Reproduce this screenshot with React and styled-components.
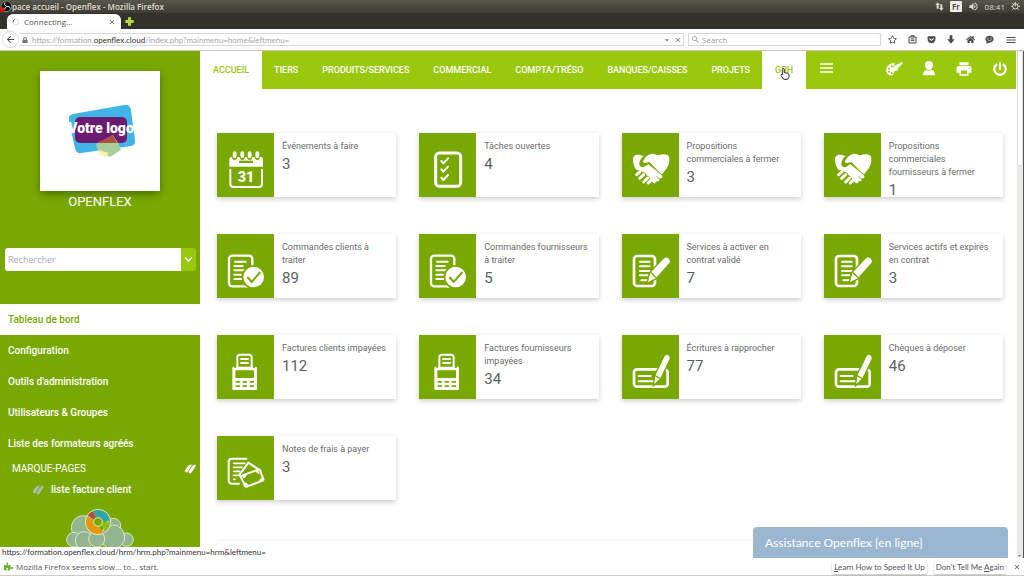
import React from "react";
import styled, { createGlobalStyle } from "styled-components";
import {
  FaCaretDown,
  FaChevronDown,
  FaGetPocket,
  FaHome,
  FaLock,
  FaPowerOff,
  FaPuzzlePiece,
  FaRegStar,
} from "react-icons/fa";
import {
  MdArrowBack,
  MdClose,
  MdMenu,
  MdPrint,
  MdSearch,
  MdVolumeUp,
} from "react-icons/md";

const GREEN = "#7aa802";
const LIME = "#99c80d";

const GlobalStyle = createGlobalStyle`
  * {
    box-sizing: border-box;
  }

  body {
    margin: 0;
    background-color: white;
    font-family: Roboto, sans-serif;
  }

  a {
    color: inherit;
    text-decoration: none;
  }

  button {
    margin: 0;
    padding: 0;
    border: none;
    background: none;
    color: inherit;
    font: inherit;
    cursor: pointer;
  }

  svg {
    display: block;
    flex-shrink: 0;
  }
`;

/* browser window */

const Window = styled.div`
  display: flex;
  flex-direction: column;
  height: 100vh;
  overflow: hidden;
`;

const TitleBar = styled.div`
  display: flex;
  align-items: center;
  justify-content: space-between;
  height: 13px;
  flex-shrink: 0;
  padding-right: 4px;
  background: linear-gradient(#57564a, #3d3c36);
  color: #dfdbd2;
  font: 8px "Open Sans", sans-serif;
`;

const TitleText = styled.div`
  display: flex;
  align-items: center;
  font-weight: 600;
`;

const Tray = styled.div`
  display: flex;
  align-items: center;
  gap: 6px;
`;

const Keyboard = styled.span`
  padding: 0 2px;
  border-radius: 1px;
  background-color: #eeece6;
  color: #3c3b36;
  font-weight: 600;
  line-height: 11px;
`;

const TabStrip = styled.div`
  display: flex;
  align-items: flex-end;
  height: 16px;
  flex-shrink: 0;
  padding-left: 7px;
  gap: 4px;
  background-color: #33322d;
`;

const BrowserTab = styled.div`
  display: flex;
  align-items: center;
  gap: 4px;
  width: 114px;
  height: 15px;
  padding: 0 5px;
  border-radius: 6px 6px 0 0;
  background-color: white;
  color: #55544f;
  font: 8px "Open Sans", sans-serif;

  span {
    flex: 1;
  }
`;

const NewTabButton = styled.button`
  align-self: center;
`;

const NavigationBar = styled.div`
  display: flex;
  align-items: center;
  height: 22px;
  flex-shrink: 0;
  padding: 0 7px 0 2px;
  border-bottom: 1px solid #c9c9c9;
  background-color: #fdfdfd;
  color: #4a4a46;
`;

const BackButton = styled.button`
  display: flex;
  align-items: center;
  justify-content: center;
  width: 17px;
  height: 17px;
  border: 1px solid #ddd;
  border-radius: 50%;
  background-color: white;
`;

const AddressBar = styled.div`
  display: flex;
  align-items: center;
  flex: 1;
  gap: 4px;
  height: 13px;
  padding: 0 1px 0 3px;
  border: 1px solid #d8d8d8;
  border-left: none;
  color: #777;
`;

const AddressText = styled.div`
  flex: 1;
  color: #aaa;
  font: 8px Lato, sans-serif;

  b {
    color: #333;
    font-weight: normal;
  }
`;

const SearchBar = styled.label`
  display: flex;
  align-items: center;
  gap: 2px;
  width: 193px;
  height: 13px;
  margin-left: 4px;
  padding: 0 2px;
  border: 1px solid #d8d8d8;
  color: #999;

  input {
    min-width: 0;
    flex: 1;
    padding: 0;
    border: none;
    outline: none;
    font: 8px "Open Sans", sans-serif;
  }

  input::placeholder {
    color: #999;
    opacity: 1;
  }
`;

const BrowserButtons = styled.div`
  display: flex;
  align-items: center;
  justify-content: space-between;
  width: 129px;
  margin-left: 7px;
`;

const Notice = styled.div`
  display: flex;
  align-items: center;
  height: 18px;
  flex-shrink: 0;
  padding: 0 3px 0 4px;
  gap: 3px;
  border-bottom: 1px solid #ccc;
  background-color: white;
  color: #555;
  font: 8px "Open Sans", sans-serif;

  p {
    flex: 1;
    margin: 0;
  }
`;

const NoticeButton = styled.button`
  height: 14px;
  padding: 0 2px;
  margin-right: 4px;
  border-radius: 2px;
  box-shadow: 0 1px 2px rgba(0, 0, 0, 0.25);
  font: 8px Lato, sans-serif;
`;

/* page */

const Page = styled.div`
  position: relative;
  display: flex;
  flex: 1;
  min-height: 0;
`;

const Sidebar = styled.aside`
  width: 200px;
  flex-shrink: 0;
  overflow: hidden;
  background-color: ${GREEN};
  color: white;
`;

const LogoCard = styled.div`
  width: 120px;
  margin: 20px auto 0;
  background-color: white;
  box-shadow: 0 3px 8px rgba(0, 0, 0, 0.35);
`;

const CompanyName = styled.h1`
  margin: 3px 0 38px;
  text-align: center;
  font-size: 13px;
  font-weight: normal;
  line-height: 16px;
`;

const SearchForm = styled.form`
  display: flex;
  height: 23px;
  margin: 0 4px 33px 5px;
  border-radius: 3px;
  overflow: hidden;

  input {
    min-width: 0;
    flex: 1;
    padding: 0 3px;
    border: none;
    outline: none;
    font: 9px "Open Sans", sans-serif;
  }

  input::placeholder {
    color: #aaa;
    opacity: 1;
  }

  button {
    display: flex;
    align-items: center;
    justify-content: center;
    width: 15px;
    background-color: ${LIME};
  }
`;

const MenuLink = styled.a`
  display: block;
  padding: 0 8px;
  background-color: ${(props) => (props.$active ? "white" : "transparent")};
  color: ${(props) => (props.$active ? GREEN : "white")};
  font-size: 10px;
  font-weight: 500;
  line-height: 31px;
`;

const BookmarkTitle = styled.div`
  display: flex;
  align-items: center;
  justify-content: space-between;
  padding: 0 4px 0 12px;
  font-size: 10px;
  line-height: 20px;
`;

const BookmarkLink = styled.a`
  display: flex;
  align-items: center;
  gap: 7px;
  padding-left: 32px;
  font-size: 10px;
  font-weight: 500;
  line-height: 21px;
`;

const CloudLogo = styled.svg`
  margin: 9px auto 0;
`;

const Main = styled.main`
  flex: 1;
  min-width: 0;
  overflow: hidden;
`;

const TopBar = styled.header`
  display: flex;
  height: 38px;
  margin-right: 1px;
  background-color: ${LIME};
  color: white;
`;

const TopNav = styled.nav`
  display: flex;
  flex: 1;
`;

const TopLink = styled.a`
  padding: 0 ${(props) => (props.$active ? "13px" : "12px")};
  background-color: ${(props) => (props.$active ? "white" : "transparent")};
  color: ${(props) => (props.$active ? LIME : "white")};
  font-size: 9px;
  font-weight: 500;
  line-height: 38px;
`;

const TopButtons = styled.div`
  display: flex;
  align-items: center;
  gap: 20px;
  padding: 0 9px 3px 0;
`;

const MenuButton = styled.button`
  padding: 0 14px 4px;
`;

const CardGrid = styled.div`
  display: grid;
  grid-template-columns: repeat(4, 1fr);
  gap: 37px 23px;
  padding: 44px 14px 41px 17px;
`;

const CardLink = styled.a`
  display: flex;
  height: 64px;
  background-color: white;
  box-shadow: 0 2px 5px rgba(0, 0, 0, 0.2);
`;

const CardIcon = styled.svg`
  width: 57px;
  height: 64px;
  background-color: ${GREEN};
`;

const CardBody = styled.div`
  padding: 7px 8px 0;
`;

const CardLabel = styled.div`
  color: #6b6b6b;
  font-size: 9px;
  line-height: 13px;
`;

const CardValue = styled.div`
  color: #5c5f63;
  font-size: 15px;
  line-height: 22px;
`;

const NextPanel = styled.section`
  height: 60px;
  margin: 0 14px 0 17px;
  box-shadow: 0 0 3px rgba(0, 0, 0, 0.1);
`;

const ScrollTrack = styled.div`
  display: flex;
  flex-direction: column;
  justify-content: space-between;
  width: 7px;
  border-right: 1px solid #555;
  background-color: #e9e9e6;
  color: #777;
`;

const ScrollThumb = styled.div`
  height: 115px;
  border: 1px solid #ddd;
  border-radius: 2px;
  background-color: white;
`;

const StatusText = styled.div`
  position: absolute;
  left: 0;
  bottom: 0;
  padding: 0 2px;
  background-color: white;
  color: #333;
  font: 8px Lato, sans-serif;
  line-height: 11px;
`;

const ChatButton = styled.button`
  position: absolute;
  right: 16px;
  bottom: 0;
  width: 255px;
  padding: 0 12px;
  border-radius: 4px 4px 0 0;
  background-color: #9bb6d0;
  color: white;
  font: 12px Lato, sans-serif;
  line-height: 31px;
  text-align: left;
`;

const Cursor = styled.svg`
  position: absolute;
  left: 780px;
  top: 17px;
`;

/* card drawings, all on a 171 x 192 canvas */

const CalendarIcon = () => (
  <>
    <path
      fill="white"
      d="M37 78q0-6 6-6h89q6 0 6 6v23H37z"
    />
    {[53, 76, 98, 121].map((x) => (
      <g key={x}>
        <ellipse cx={x} cy="67" rx="9" ry="14" fill={GREEN} />
        <ellipse cx={x} cy="65" rx="6" ry="10" fill="white" />
      </g>
    ))}
    <rect x="66" y="83" width="42" height="7" fill={GREEN} />
    <path
      d="M40 108v44q0 10 10 10h75q10 0 10-10v-44"
      fill="none"
      stroke="white"
      strokeWidth="6"
    />
    <text
      x="87"
      y="147"
      textAnchor="middle"
      fill="white"
      fontFamily="Roboto, sans-serif"
      fontWeight="900"
      fontSize="43"
    >
      31
    </text>
  </>
);

const TasksIcon = () => (
  <g
    fill="none"
    stroke="white"
    strokeWidth="6"
    strokeLinecap="round"
    strokeLinejoin="round"
  >
    <rect x="50" y="60" width="75" height="100" rx="11" strokeWidth="9" />
    <path d="M67 84l6 7 14-15M67 109l6 7 14-15M67 134l6 7 14-15" />
  </g>
);

const HandshakeIcon = () => (
  <>
    <g fill="white">
      <path d="M33 80c-1-10 7-16 17-15 7 1 12 5 20 3-8 5-14 13-16 21-2 11 6 14 14 9l9-6 42 34c5 5 1 12-5 10 1 6-4 11-10 8 0 5-5 8-9 6-5-2-5-8-10-12-3-6-7-9-11-11-2-7-8-11-14-11-4-6-10-6-15-4-9-8-11-20-12-32z" />
      <path d="M62 88c5-13 15-25 29-26 9 0 13 5 20 4 9-3 20-3 26 0 7 5 6 21 2 31-5 12-13 19-20 28L83 88c-8 0-12 5-21 0z" />
    </g>
    <g stroke="white" strokeWidth="9" strokeLinecap="round">
      <path d="M44 125l10-9M53 136l12-11M65 147l12-12M79 150l7-7" />
    </g>
    <path
      d="M70 68c-8 5-14 13-16 21-2 11 6 14 14 9l13-8"
      fill="none"
      stroke={GREEN}
      strokeWidth="4"
    />
    <path
      d="M104 130l12 12M113 120l13 11"
      stroke={GREEN}
      strokeWidth="3"
    />
  </>
);

const OrderIcon = () => (
  <>
    <g fill="none" stroke="white" strokeWidth="7" strokeLinecap="round">
      <rect x="36" y="65" width="70" height="92" rx="10" />
      <path
        d="M54 83h32M52 96h25M52 109h32M52 122h20M52 135h25"
        strokeWidth="6"
      />
    </g>
    <circle cx="110" cy="129" r="36" fill={GREEN} />
    <circle cx="110" cy="129" r="31" fill="white" />
    <path
      d="M91 129l13 15 26-30"
      fill="none"
      stroke={GREEN}
      strokeWidth="6"
    />
  </>
);

const ContractIcon = () => (
  <>
    <g fill="none" stroke="white" strokeWidth="8" strokeLinecap="round">
      <rect x="36" y="66" width="63" height="90" rx="10" />
      <path d="M54 83h29M54 97h29M54 111h29M54 124h22M58 139h18" strokeWidth="6" />
    </g>
    <path
      d="M78 144l7-27 40-43q8-7 15 0t1 14l-40 45z"
      fill="white"
      stroke={GREEN}
      strokeWidth="8"
      paintOrder="stroke"
    />
    <path d="M86 115l17 16" stroke={GREEN} strokeWidth="4" />
  </>
);

const InvoiceIcon = () => (
  <>
    <path
      d="M61 98V67q0-8 8-8h27q8 0 8 8v31M70 72h25M70 84h25"
      fill="none"
      stroke="white"
      strokeWidth="6"
    />
    <rect x="46" y="95" width="74" height="70" rx="4" fill="white" />
    <path
      fill={GREEN}
      d="M55 106h56v23H55zM56 138h13v5H56zM77 138h13v5H77zM98 138h13v5H98zM56 151h13v5H56zM77 151h13v5H77zM98 151h13v5H98zM52 91h5v8h-5zM108 91h5v8h-5z"
    />
  </>
);

const ChequeIcon = () => (
  <>
    <g fill="none" stroke="white" strokeWidth="8" strokeLinecap="round">
      <rect x="36" y="103" width="101" height="52" rx="9" />
      <path d="M50 123h36M50 139h43" strokeWidth="6" />
    </g>
    <path
      d="M97 147l3-25 27-57q6-9 12-4t3 12l-27 57z"
      fill="white"
      stroke={GREEN}
      strokeWidth="8"
      paintOrder="stroke"
    />
    <path d="M98 121l19 11" stroke={GREEN} strokeWidth="4" />
  </>
);

const ExpenseIcon = () => (
  <>
    <g fill="none" stroke="white" strokeWidth="6" strokeLinecap="round">
      <path d="M88 68H45q-10 0-10 10v54q0 11 10 11h21" />
      <path d="M50 82h33M50 94h25M50 106h18M50 118h10M50 130h4" strokeWidth="5" />
    </g>
    <g fill={GREEN} stroke="white" strokeWidth="6" strokeLinejoin="round">
      <path d="M66 118l28-38 36 24-26 38z" />
      <path d="M74 119l50-18q4-1 5 2l10 26q1 4-2 5l-48 18q-4 1-5-2l-12-27q-1-3 2-4z" />
    </g>
    <path
      d="M76 119l14-5q-2 9-11 13zM123 102l5 13q-9-1-12-10zM138 132l-14 5q3-9 11-12zM86 150l-5-13q9 2 13 10z"
      fill="white"
    />
  </>
);

const cards = [
  { label: "Événements à faire", value: 3, icon: CalendarIcon },
  { label: "Tâches ouvertes", value: 4, icon: TasksIcon },
  { label: "Propositions commerciales à fermer", value: 3, icon: HandshakeIcon },
  {
    label: "Propositions commerciales fournisseurs à fermer",
    value: 1,
    icon: HandshakeIcon,
  },
  { label: "Commandes clients à traiter", value: 89, icon: OrderIcon },
  { label: "Commandes fournisseurs à traiter", value: 5, icon: OrderIcon },
  { label: "Services à activer en contrat validé", value: 7, icon: ContractIcon },
  {
    label: "Services actifs et expirés en contrat",
    value: 3,
    icon: ContractIcon,
  },
  { label: "Factures clients impayées", value: 112, icon: InvoiceIcon },
  { label: "Factures fournisseurs impayées", value: 34, icon: InvoiceIcon },
  { label: "Écritures à rapprocher", value: 77, icon: ChequeIcon },
  { label: "Chèques à déposer", value: 46, icon: ChequeIcon },
  { label: "Notes de frais à payer", value: 3, icon: ExpenseIcon },
];

const topLinks = [
  "ACCUEIL",
  "TIERS",
  "PRODUITS/SERVICES",
  "COMMERCIAL",
  "COMPTA/TRÉSO",
  "BANQUES/CAISSES",
  "PROJETS",
  "GRH",
];

const menuLinks = [
  "Tableau de bord",
  "Configuration",
  "Outils d'administration",
  "Utilisateurs & Groupes",
  "Liste des formateurs agréés",
];

const Card = ({ label, value, icon: Icon }) => (
  <CardLink href="#">
    <CardIcon viewBox="0 0 171 192" aria-hidden="true">
      <Icon />
    </CardIcon>
    <CardBody>
      <CardLabel>{label}</CardLabel>
      <CardValue>{value}</CardValue>
    </CardBody>
  </CardLink>
);

const BookmarkIcon = ({ color }) => (
  <svg width="12" height="10" viewBox="0 0 36 30" aria-hidden="true">
    <path
      d="M1 22L12 6q3-4 8-4h4L11 23l-3 4-2-4zM13 24L25 6q3-4 7-4 5 1 2 6L22 26q-3 4-7 1z"
      fill={color}
    />
  </svg>
);

const PaletteIcon = () => (
  <svg width="17" height="16" viewBox="0 0 51 48" aria-hidden="true">
    <path
      d="M19 7C8 9 0 18 1 29c1 10 9 16 17 14 7-2 3-9 7-12s10 0 11-7c0-3-1-5-3-7l-7 6-7-5 9-10q-4-2-9-1z"
      fill="white"
    />
    <g fill={LIME}>
      <circle cx="17" cy="16" r="3" />
      <circle cx="9" cy="23" r="3" />
      <circle cx="9" cy="32" r="3" />
      <circle cx="17" cy="36" r="3" />
    </g>
    <path d="M22 24q-1-9 7-11L47 3l4 3-14 14q-6 7-15 4z" fill="white" />
  </svg>
);

const PersonIcon = () => (
  <svg width="12" height="15" viewBox="0 0 36 45" aria-hidden="true">
    <path
      d="M18 0c8 0 12 5 12 12 0 8-5 15-12 15S6 20 6 12C6 5 10 0 18 0zM0 43c0-9 3-15 11-16q7 5 14 0c8 1 11 7 11 16z"
      fill="white"
    />
  </svg>
);

const CompanyLogo = () => (
  <svg width="120" height="120" viewBox="0 0 120 120" aria-label="Votre logo">
    <path
      d="M33 43l51-9q6-1 7 5l4 30q1 5-4 6l-50 7q-5 1-6-5l-6-27q-1-6 4-7z"
      fill="#41b4e6"
    />
    <rect x="35" y="46" width="52" height="26" rx="5" fill="#6c1c70" />
    <path d="M56 73l17-9 5 8 3 7-11 7-12-6z" fill="#a8cf9b" />
    <path d="M57 72l16-8 4 8z" fill="#a9523e" />
    <path d="M59 79l10 3-4 4-6-3z" fill="#f6f3a0" />
    <text
      x="61"
      y="62"
      textAnchor="middle"
      fill="white"
      fontFamily="Roboto, sans-serif"
      fontWeight="900"
      fontSize="14"
    >
      Votre logo
    </text>
  </svg>
);

const Cloud = () => (
  <CloudLogo width="68" height="50" viewBox="0 0 204 150" aria-hidden="true">
    <g fill="#93b592" stroke="#dbe8bd" strokeWidth="3">
      <circle cx="52" cy="56" r="36" />
      <circle cx="142" cy="50" r="22" />
      <circle cx="24" cy="92" r="22" />
      <circle cx="182" cy="92" r="20" />
      <circle cx="54" cy="94" r="26" />
      <circle cx="140" cy="84" r="36" />
      <circle cx="92" cy="90" r="24" />
    </g>
    <g fill="none" strokeWidth="24">
      <path d="M86 15A26 26 0 0 1 121 36" stroke="#36a3a5" />
      <path d="M121 40A26 26 0 0 1 112 58" stroke="#8cbf16" />
      <path d="M106 63A26 26 0 0 1 73 27" stroke="#e59a0c" />
      <path d="M74 24A26 26 0 0 1 83 16" stroke="#c73a5c" />
    </g>
    <circle cx="96" cy="39" r="38" fill="none" stroke="#dbe8bd" strokeWidth="3" />
    <circle cx="96" cy="39" r="13" fill="#7aa802" stroke="#dbe8bd" strokeWidth="3" />
  </CloudLogo>
);

const BrowserChrome = () => (
  <>
    <TitleBar>
      <TitleText>
        <svg width="12" height="13" viewBox="0 0 36 39" aria-hidden="true">
          <circle cx="19" cy="19" r="16" fill="#111" stroke="#aaa" strokeWidth="2" />
          <path d="M19 19q-9-4-4-12M19 19q11-2 12 7M19 19q-2 10-11 9" fill="none" stroke="#ddd" strokeWidth="3" />
          <circle cx="7" cy="29" r="7" fill="#e01515" />
        </svg>
        pace accueil - Openflex - Mozilla Firefox
      </TitleText>
      <Tray>
        <svg width="9" height="9" viewBox="0 0 27 27" fill="#dfdbd2" aria-hidden="true">
          <path d="M8 1l7 8h-4v11H5V9H1zM19 26l-7-8h4V7h6v11h4z" />
        </svg>
        <Keyboard>Fr</Keyboard>
        <MdVolumeUp size={11} />
        <span>08:41</span>
        <svg width="9" height="9" viewBox="0 0 27 27" fill="none" stroke="#dfdbd2" strokeWidth="3" aria-hidden="true">
          <circle cx="13" cy="13" r="8" />
          <path d="M13 0v13M1 13h4M22 13h5M4 4l4 4M23 4l-4 4M4 23l4-4M23 23l-4-4" />
        </svg>
      </Tray>
    </TitleBar>
    <TabStrip>
      <BrowserTab>
        <svg width="8" height="8" viewBox="0 0 24 24" fill="none" strokeWidth="3" aria-hidden="true">
          <circle cx="12" cy="12" r="9" stroke="#ddd" />
          <path d="M3 12a9 9 0 0 1 6-8" stroke="#555" />
        </svg>
        <span>Connecting...</span>
        <MdClose size={8} />
      </BrowserTab>
      <NewTabButton aria-label="New tab">
        <svg width="9" height="9" viewBox="0 0 27 27" aria-hidden="true">
          <path d="M9 1h9v8h8v9h-8v8H9v-8H1V9h8z" fill="#b5dc3c" />
        </svg>
      </NewTabButton>
    </TabStrip>
    <NavigationBar>
      <BackButton aria-label="Back">
        <MdArrowBack size={11} />
      </BackButton>
      <AddressBar>
        <FaLock size={6} />
        <AddressText>
          https://formation.<b>openflex.cloud</b>
          /index.php?mainmenu=home&amp;leftmenu=
        </AddressText>
        <FaCaretDown size={6} />
        <MdClose size={8} />
      </AddressBar>
      <SearchBar>
        <MdSearch size={9} />
        <input type="text" placeholder="Search" aria-label="Search" />
      </SearchBar>
      <BrowserButtons>
        <FaRegStar size={9} />
        <svg width="9" height="9" viewBox="0 0 27 27" fill="none" stroke="currentColor" strokeWidth="3" aria-hidden="true">
          <path d="M3 6h21v18H3zM9 6V2h9v4M8 12h11M8 17h11" />
        </svg>
        <FaGetPocket size={9} />
        <svg width="8" height="9" viewBox="0 0 24 27" fill="currentColor" aria-hidden="true">
          <path d="M8 1h8v12h7L12 26 1 13h7z" />
        </svg>
        <FaHome size={9} />
        <svg width="9" height="9" viewBox="0 0 27 27" aria-hidden="true">
          <path d="M13 2c8 0 13 4 13 10s-5 11-13 11l-9 3 1-6C-4 12 4 2 13 2z" fill="currentColor" />
          <path d="M7 9h4M16 9h4M7 14q6 5 13 0" fill="none" stroke="white" strokeWidth="2" />
        </svg>
        <MdMenu size={12} />
      </BrowserButtons>
    </NavigationBar>
  </>
);

const App = () => (
  <Window>
    <GlobalStyle />
    <BrowserChrome />
    <Page>
      <Sidebar>
        <LogoCard>
          <CompanyLogo />
        </LogoCard>
        <CompanyName>OPENFLEX</CompanyName>
        <SearchForm>
          <input type="text" placeholder="Rechercher" aria-label="Rechercher" />
          <button type="button" aria-label="Options">
            <FaChevronDown size={9} />
          </button>
        </SearchForm>
        <nav>
          {menuLinks.map((name, index) => (
            <MenuLink key={name} href="#" $active={index === 0}>
              {name}
            </MenuLink>
          ))}
        </nav>
        <BookmarkTitle>
          MARQUE-PAGES
          <BookmarkIcon color="white" />
        </BookmarkTitle>
        <BookmarkLink href="#">
          <BookmarkIcon color="#a3bdb0" />
          liste facture client
        </BookmarkLink>
        <Cloud />
      </Sidebar>
      <Main>
        <TopBar>
          <TopNav>
            {topLinks.map((name) => (
              <TopLink
                key={name}
                href="#"
                $active={name === "ACCUEIL" || name === "GRH"}
              >
                {name}
              </TopLink>
            ))}
            <MenuButton aria-label="Menu">
              <svg width="13" height="10" viewBox="0 0 39 30" aria-hidden="true">
                <path d="M0 1h39v4H0zM0 13h39v4H0zM0 25h39v4H0z" fill="white" />
              </svg>
            </MenuButton>
          </TopNav>
          <TopButtons>
            <button aria-label="Thème">
              <PaletteIcon />
            </button>
            <button aria-label="Utilisateur">
              <PersonIcon />
            </button>
            <button aria-label="Imprimer">
              <MdPrint size={18} />
            </button>
            <button aria-label="Déconnexion">
              <FaPowerOff size={14} />
            </button>
          </TopButtons>
        </TopBar>
        <CardGrid>
          {cards.map((card) => (
            <Card key={card.label} {...card} />
          ))}
        </CardGrid>
        <NextPanel />
      </Main>
      <ScrollTrack>
        <ScrollThumb />
        <FaCaretDown size={5} />
      </ScrollTrack>
      <StatusText>
        https://formation.openflex.cloud/hrm/hrm.php?mainmenu=hrm&amp;leftmenu=
      </StatusText>
      <ChatButton>Assistance Openflex [en ligne]</ChatButton>
      <Cursor width="10" height="12" viewBox="0 0 30 36" aria-hidden="true">
        <path
          d="M8 2q4-2 5 2v10l10 2q4 1 4 5v6l-4 7H11l-8-12q-1-4 3-3l2 2z"
          fill="white"
          stroke="#333"
          strokeWidth="3"
        />
      </Cursor>
    </Page>
    <Notice>
      <FaPuzzlePiece size={9} color="#6bb01e" />
      <p>Mozilla Firefox seems slow... to... start.</p>
      <NoticeButton>
        <u>L</u>earn How to Speed It Up
      </NoticeButton>
      <NoticeButton>
        Don't Tell Me <u>A</u>gain
      </NoticeButton>
      <MdClose size={8} />
    </Notice>
  </Window>
);

export default App;
